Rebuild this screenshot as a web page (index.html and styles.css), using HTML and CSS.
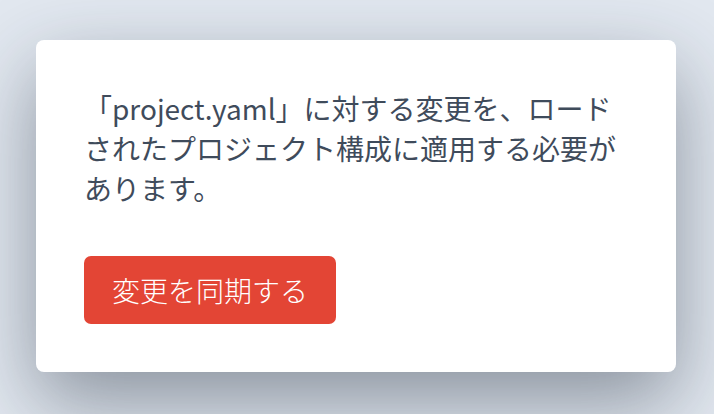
FILE: index.html
```html
<!DOCTYPE html>
<html lang="ja">
<head>
<meta charset="utf-8">
<link rel="stylesheet" href="styles.css">
</head>
<body>
<div class="card">
  <p class="message">「project.yaml」に対する変更を、ロードされたプロジェクト構成に適用する必要があります。</p>
  <button class="sync-btn" type="button">変更を同期する</button>
</div>
</body>
</html>
```
FILE: styles.css
```css
html, body {
  margin: 0;
  height: 100%;
}
body {
  background: #e2e8f0;
  padding: 40px 36px;
  box-sizing: border-box;
  font-family: "Noto Sans CJK JP", "Noto Sans", sans-serif;
}
.card {
  width: 640px;
  box-sizing: border-box;
  padding: 48px;
  background: #ffffff;
  border-radius: 8px;
  box-shadow: 0 30px 80px rgba(30, 42, 58, 0.45);
  display: flex;
  flex-direction: column;
  align-items: flex-start;
  gap: 48px;
}
.message {
  margin: 0;
  font-size: 28px;
  line-height: 40px;
  color: #3f4b5b;
}
.sync-btn {
  font-family: inherit;
  font-size: 28px;
  line-height: 40px;
  padding: 14px 28px;
  border: none;
  border-radius: 7px;
  background: #e34535;
  color: #ffffff;
  font-weight: 300;
}
```
